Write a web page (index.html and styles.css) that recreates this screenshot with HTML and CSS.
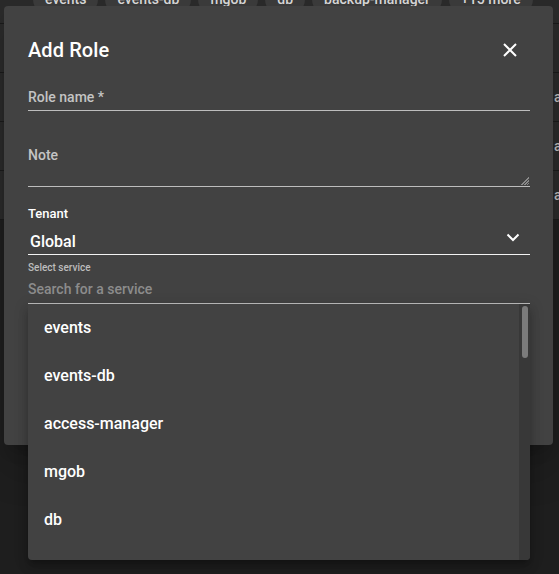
FILE: index.html
```html
<!DOCTYPE html>
<html lang="en">

<head>
    <meta charset="UTF-8">
    <meta name="viewport" content="width=device-width, initial-scale=1.0">
    <title>Add Role</title>
    <link rel="stylesheet" href="styles.css">
</head>

<body>

    <div class="page">
        <div class="chip-row">
            <span class="chip">events</span>
            <span class="chip">events-db</span>
            <span class="chip">mgob</span>
            <span class="chip">db</span>
            <span class="chip">backup-manager</span>
            <span class="chip">+15 more</span>
        </div>
        <div class="table">
            <div class="table-row"></div>
            <div class="table-row"><span class="cell">a</span></div>
            <div class="table-row"><span class="cell">a</span></div>
            <div class="table-row"><span class="cell">a</span></div>
        </div>
    </div>

    <div class="dialog">
        <div class="dialog-header">
            <h2>Add Role</h2>
            <button class="close-btn" type="button" aria-label="close">
                <svg width="14" height="14" viewBox="0 0 14 14">
                    <path d="M1 1 L13 13 M13 1 L1 13" stroke="#fff" stroke-width="2" fill="none"/>
                </svg>
            </button>
        </div>

        <form class="role-form" action="#" method="post">
            <div class="field field-name">
                <label for="rolename">Role name *</label>
            </div>

            <div class="field field-note">
                <label for="note">Note</label>
                <div class="note-area">
                    <span class="resize-handle"></span>
                </div>
            </div>

            <div class="field field-tenant">
                <label class="tenant-label">Tenant</label>
                <div class="select">
                    <span>Global</span>
                    <svg width="14" height="9" viewBox="0 0 14 9">
                        <path d="M1.5 1.5 L7 7 L12.5 1.5" stroke="#fff" stroke-width="2" fill="none"/>
                    </svg>
                </div>
            </div>

            <div class="field field-service">
                <label class="small-label">Select service</label>
                <div class="search">Search for a service</div>

                <div class="dropdown">
                    <ul class="options">
                        <li>events</li>
                        <li>events-db</li>
                        <li>access-manager</li>
                        <li>mgob</li>
                        <li>db</li>
                        <li>backup-manager</li>
                    </ul>
                    <div class="scroll-track">
                        <div class="scroll-thumb"></div>
                    </div>
                </div>
            </div>
        </form>
    </div>

</body>

</html>
```

FILE: styles.css
```css
body {
    font-family: Roboto, "Liberation Sans", Arial, sans-serif;
    background-color: #1e1e1e;
    margin: 0;
    padding: 0;
    width: 559px;
    height: 574px;
    overflow: hidden;
    position: relative;
    color: #fff;
}

/* page behind the dialog */

.page {
    height: 100%;
}

.chip-row {
    display: flex;
    gap: 7px;
    padding-left: 33px;
    margin-top: -17px;
    height: 41px;
    background-color: #2a2a2a;
    box-sizing: border-box;
    border-bottom: 1px solid #1a1a1a;
}

.chip {
    flex-shrink: 0;
    white-space: nowrap;
    background-color: #3b3b3b;
    color: #d8d8d8;
    font-size: 14px;
    font-weight: 500;
    line-height: 32px;
    height: 32px;
    padding: 0 12px;
    border-radius: 16px;
}

.table-row {
    height: 49px;
    background-color: #2a2a2a;
    border-bottom: 1px solid #1a1a1a;
    box-sizing: border-box;
    display: flex;
    align-items: center;
    padding-left: 554px;
}

.cell {
    color: #bdbdbd;
    font-size: 14px;
    font-weight: 500;
}

/* dialog */

.dialog {
    position: absolute;
    left: 4px;
    top: 6px;
    width: 549px;
    height: 439px;
    background-color: #424242;
    border-radius: 4px;
    box-shadow: 0 11px 15px -7px rgba(0, 0, 0, 0.2), 0 24px 38px 3px rgba(0, 0, 0, 0.14);
    box-sizing: border-box;
    padding: 28px 24px 0 24px;
}

.dialog-header {
    display: flex;
    justify-content: space-between;
    align-items: center;
    height: 32px;
}

.dialog-header h2 {
    margin: 0;
    font-size: 20px;
    font-weight: 500;
    letter-spacing: 0.1px;
}

.close-btn {
    background: none;
    border: none;
    padding: 0;
    width: 14px;
    height: 14px;
    margin-right: 12px;
    cursor: pointer;
    display: flex;
}

.role-form {
    width: 502px;
    margin-top: 18px;
}

.field label {
    display: block;
    color: #c4c4c4;
    font-size: 14px;
    font-weight: 500;
}

.field-name {
    height: 26px;
    line-height: 26px;
    border-bottom: 1px solid #bdbdbd;
}

.field-note {
    margin-top: 34px;
    border-bottom: 1px solid #bdbdbd;
}

.field-note label {
    line-height: 20px;
}

.note-area {
    height: 21px;
    position: relative;
}

.resize-handle {
    position: absolute;
    right: 1px;
    bottom: 1px;
    width: 9px;
    height: 9px;
    background: repeating-linear-gradient(135deg, transparent 0 1px, #8a8a8a 1px 2px);
    clip-path: polygon(100% 0, 100% 100%, 0 100%);
}

.field-tenant {
    margin-top: 18px;
}

.field .tenant-label {
    color: #fff;
    font-size: 13px;
    line-height: 18px;
}

.select {
    display: flex;
    justify-content: space-between;
    align-items: center;
    height: 25px;
    padding: 6px 10px 0 2px;
    border-bottom: 1px solid #f2f2f2;
    font-size: 16px;
    font-weight: 500;
}

.select svg {
    margin-top: -9px;
}

.field-service {
    margin-top: 6px;
    position: relative;
}

.field .small-label {
    font-size: 10px;
    line-height: 14px;
    color: #bdbdbd;
}

.search {
    height: 28px;
    line-height: 28px;
    font-size: 14px;
    font-weight: 500;
    color: #8c8c8c;
    border-bottom: 1px solid #bdbdbd;
}

.dropdown {
    position: absolute;
    left: 0;
    top: 100%;
    width: 502px;
    height: 256px;
    background-color: #424242;
    border-radius: 0 0 4px 4px;
    box-shadow: 0 5px 5px -3px rgba(0, 0, 0, 0.2), 0 8px 10px 1px rgba(0, 0, 0, 0.14), 0 3px 14px 2px rgba(0, 0, 0, 0.12);
    overflow: hidden;
    display: flex;
}

.options {
    list-style: none;
    margin: 0;
    padding: 0;
    flex: 1;
}

.options li {
    height: 48px;
    line-height: 48px;
    padding-left: 16px;
    font-size: 16px;
    font-weight: 500;
    color: #fff;
}

.scroll-track {
    width: 11px;
    background-color: #383838;
    position: relative;
}

.scroll-thumb {
    position: absolute;
    left: 3px;
    top: 2px;
    width: 6px;
    height: 52px;
    border-radius: 3px;
    background-color: #7b7b7b;
}
```
